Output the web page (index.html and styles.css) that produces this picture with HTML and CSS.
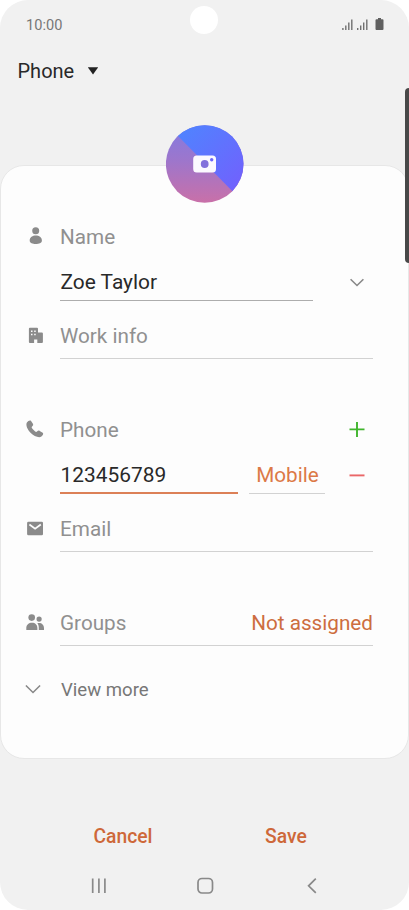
FILE: index.html
```html
<!DOCTYPE html>
<html lang="en">
<head>
<meta charset="utf-8">
<title>Edit contact</title>
<link rel="stylesheet" href="styles.css">
</head>
<body>
<div class="screen">
  <header class="status">
    <span class="time">10:00</span>
    <span class="camera-hole"></span>
    <svg class="signals" width="44" height="14" viewBox="0 0 44 14">
      <path d="M.9 11v2M3.800 8.500V13M6.800 5.500V13M9.800 2.500V13M15.700 11v2M18.700 8.500V13M21.700 5.500V13M24.800 2.500V13" stroke="#707070" stroke-width="1.400"/>
      <path d="M36 1h3v1.200h1.500q1 0 1 1V12q0 1-1 1h-6q-1 0-1-1V3.200q0-1 1-1H36z" fill="#606060"/>
    </svg>
  </header>
  <div class="storage">
    <span class="storage-name">Phone</span>
    <svg width="12" height="8" viewBox="0 0 12 8"><path d="M.8.200h10.400L6 7.500z" fill="#222"/></svg>
  </div>
  <span class="edge-handle"></span>

  <main class="card">
    <div class="avatar">
      <svg width="78" height="78" viewBox="0 0 78 78">
        <defs>
          <linearGradient id="pink" x1="0" y1="0" x2="0" y2="1"><stop offset="0" stop-color="#817be2"/><stop offset=".45" stop-color="#9d76cc"/><stop offset="1" stop-color="#c970a8"/></linearGradient>
          <linearGradient id="blue" x1="0" y1="0" x2="1" y2="1"><stop offset=".1" stop-color="#4f84ff"/><stop offset=".85" stop-color="#7062fd"/></linearGradient>
          <clipPath id="disc"><circle cx="38.700" cy="39" r="38.800"/></clipPath>
        </defs>
        <g clip-path="url(#disc)">
          <path d="M0 0h78v78H0z" fill="url(#pink)"/>
          <path d="M1.200 0H78v78z" fill="url(#blue)"/>
        </g>
        <rect x="27.200" y="30.500" width="22.800" height="17" rx="3.500" fill="#fbf9ff"/>
        <circle cx="38.700" cy="39" r="3.900" fill="#8270dc"/>
        <circle cx="45.700" cy="34.700" r="1.700" fill="#6b65fb"/>
      </svg>
    </div>

    <div class="row label name">
      <svg class="icon" width="20" height="20" viewBox="0 0 20 20"><circle cx="10.700" cy="4.700" r="3.500"/><path d="M4.700 14.400c0-3 2.900-4.900 6.100-4.900s6.100 1.900 6.100 4.900c0 2.700-3 3.500-6.100 3.500s-6.100-.8-6.100-3.500z"/></svg>
      <span>Name</span>
    </div>
    <div class="row value">
      <span class="input fullname">Zoe Taylor</span>
      <svg class="expand" width="16" height="10" viewBox="0 0 16 10"><path d="M1.600 1.300 8 7.500l6.400-6.200" fill="none" stroke="#888" stroke-width="1.600"/></svg>
    </div>
    <div class="row work">
      <svg class="icon" width="20" height="20" viewBox="0 0 20 20"><path fill-rule="evenodd" d="M4.900 1.700h7.100q1 0 1 1v3.800h3.900q1 0 1 1V16q0 1-1 1h-4.600v-3.500H9.100V17H4.900q-1 0-1-1V2.700q0-1 1-1zM6 4.400v1.500h1.500V4.400zm3.200 0v1.500h1.500V4.400zM6 7.700v1.500h1.500V7.700zm3.200 0v1.500h1.500V7.700z"/></svg>
      <span class="input">Work info</span>
    </div>

    <div class="row label phone">
      <svg class="icon" width="20" height="20" viewBox="0 0 20 20"><path d="M2.900 3.400C4.100 1.700 6 .8 6.900 1.800l2 2.900c.6 1 .2 1.900-.8 2.800-.8.700-.4 1.300.3 2.200l2.500 2.600c.8.700 1.400 1 2.100.3.900-.9 1.800-1.300 2.700-.7l3 1.900c1.100.9.200 2.700-1.300 3.800-2.500 1.700-7.600-.4-10.900-3.800C3.500 10.400 1.400 6.200 2.900 3.400z"/></svg>
      <span>Phone</span>
      <svg class="action" width="16" height="16" viewBox="0 0 16 16"><path d="M.5 7.400h15M8 0v15" stroke="#40b52d" stroke-width="1.900"/></svg>
    </div>
    <div class="row number-row">
      <span class="input number">123456789</span>
      <span class="input type">Mobile</span>
      <svg class="action" width="16" height="16" viewBox="0 0 16 16"><path d="M.5 8.400h15" stroke="#ea6768" stroke-width="1.900"/></svg>
    </div>
    <div class="row email">
      <svg class="icon" width="20" height="20" viewBox="0 0 20 20"><path d="M4.400 2.700h13.300q1.300 0 1.300 1.300v10.900q0 1.300-1.300 1.300H4.400q-1.300 0-1.300-1.300V4q0-1.300 1.300-1.300z"/><path d="m5.400 5.500 5.700 4.300 5.700-4.300" fill="none" stroke="#fdfdfd" stroke-width="1.700"/></svg>
      <span class="input">Email</span>
    </div>

    <div class="row groups">
      <svg class="icon" width="20" height="20" viewBox="0 0 20 20"><circle cx="7.700" cy="4.600" r="3.300"/><circle cx="15.100" cy="6.100" r="2.600"/><path d="M2.300 17v-1.700c0-3.600 2.500-5.500 5.700-5.500s5.400 1.900 5.400 5.500V17zM13.300 10.100c3.900-.8 6.700 1.200 6.700 5.200V17h-5.200v-1.800c0-2.200-.5-3.700-1.500-5.100z"/></svg>
      <span class="input"><span>Groups</span><span class="accent">Not assigned</span></span>
    </div>
    <div class="row more">
      <svg class="more-icon" width="16" height="10" viewBox="0 0 16 10"><path d="M.9.500 8 7.500 15.100.5" fill="none" stroke="#888" stroke-width="1.500"/></svg>
      <span>View more</span>
    </div>
  </main>

  <div class="buttons"><span>Cancel</span><span>Save</span></div>
  <nav class="nav">
    <svg width="18" height="18" viewBox="0 0 18 18"><path d="M2.700 1.500v14.600M8.900 1.500v14.600M14.900 1.500v14.600" stroke="#898989" stroke-width="1.700"/></svg>
    <svg width="18" height="18" viewBox="0 0 18 18"><rect x="1" y="1.500" width="14.500" height="14.500" rx="4" fill="none" stroke="#898989" stroke-width="1.700"/></svg>
    <svg width="18" height="18" viewBox="0 0 18 18"><path d="M11.800 1.700 4.600 8.800l7.200 7.100" fill="none" stroke="#898989" stroke-width="1.700"/></svg>
  </nav>
</div>
</body>
</html>
```
FILE: styles.css
```css
* { box-sizing: border-box; }
body { margin: 0; background: #fff; font-family: Roboto, sans-serif; }
svg { display: block; flex: none; }
.screen {
  position: relative;
  display: flex;
  flex-direction: column;
  width: 409px;
  height: 910px;
  overflow: hidden;
  border-radius: 28px;
  background: #f1f1f1;
}
.status {
  display: flex;
  align-items: center;
  justify-content: space-between;
  height: 48px;
  padding: 0 23px 0 26px;
}
.time { padding-top: 1px; font-size: 14.600px; color: #777; }
.camera-hole {
  position: absolute;
  top: 6px;
  left: 190px;
  width: 28px;
  height: 28px;
  border-radius: 50%;
  background: #fff;
}
.storage {
  display: flex;
  align-items: center;
  height: 46px;
  padding-left: 17.500px;
  font-size: 20px;
  color: #292929;
}
.storage-name { width: 69.500px; }
.edge-handle {
  position: absolute;
  z-index: 2;
  top: 88px;
  right: -4px;
  width: 8px;
  height: 175px;
  border-radius: 4px;
  background: #484848;
}
.card {
  position: relative;
  height: 594px;
  margin-top: 71px;
  padding: 52px 35px 0 23px;
  border: 1px solid #e7e7e7;
  border-radius: 24px;
  background: #fdfdfd;
  color: #909090;
  font-size: 20.700px;
}
.avatar { position: absolute; top: -41px; left: 165px; }
.row { display: flex; }
.icon { align-self: center; margin: 0 16px 2px -1px; fill: #8b8b8b; overflow: visible; }
.label { height: 38px; align-items: center; padding-left: 1px; }
.name .icon { margin-left: 0; margin-right: 15px; }
.input {
  display: flex;
  flex: 1;
  align-items: center;
  justify-content: space-between;
  border-bottom: 1px solid #d2d2d2;
}
.value { height: 37px; margin-top: 8px; padding-left: 36px; align-items: stretch; }
.fullname { flex: none; width: 253px; padding-left: 0.500px; border-color: #adadad; color: #292929; font-size: 20.900px; }
.expand { align-self: center; margin-left: 36px; }
.work { height: 45px; margin-top: 13px; padding-left: 1px; }
.work .icon { margin-left: -0.500px; margin-right: 15.500px; }
.phone { margin-top: 52px; padding-right: 8px; }
.action { margin-left: auto; align-self: center; }
.number-row { height: 38px; margin-top: 7px; padding: 0 8px 0 36px; }
.number {
  flex: none;
  width: 178px;
  padding: 2px 0 0 0.500px;
  border-bottom: 2px solid #dc8057;
  color: #292929;
  font-size: 20.900px;
}
.type {
  flex: none;
  justify-content: center;
  width: 76px;
  height: 38px;
  margin-left: 11px;
  padding-left: 1px;
  color: #dc7947;
}
.email { height: 45px; margin-top: 13px; padding-left: 1px; }
.groups { height: 45px; margin-top: 49px; padding-left: 1px; }
.accent { color: #cd6d40; }
.more { align-items: center; height: 39px; margin-top: 24px; color: #777; font-size: 18.600px; }
.more-icon { margin: 0 20px 0 1px; }
.buttons {
  display: flex;
  gap: 112.500px;
  height: 42px;
  margin-top: 56px;
  padding-left: 93.500px;
  align-items: center;
  color: #ce6839;
  font-size: 19.300px;
  font-weight: 500;
}
.nav {
  display: flex;
  gap: 89px;
  padding: 20px 0 0 90px;
}
```
